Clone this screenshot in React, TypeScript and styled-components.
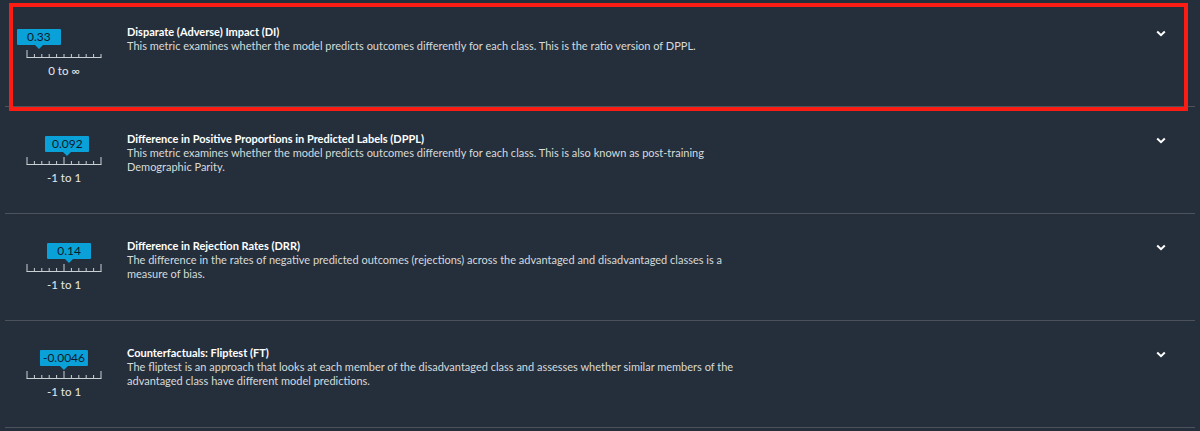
import React from 'react'
import styled, { createGlobalStyle } from 'styled-components'

type Metric = {
  title: string
  description: string
  value: string
  range: string
  position: number // 0..1 along the ruler
  centerMark?: boolean
}

const metrics: Metric[] = [
  {
    title: 'Disparate (Adverse) Impact (DI)',
    description:
      'This metric examines whether the model predicts outcomes differently for each class. This is the ratio version of DPPL.',
    value: '0.33',
    range: '0 to ∞',
    position: 0.16,
  },
  {
    title: 'Difference in Positive Proportions in Predicted Labels (DPPL)',
    description:
      'This metric examines whether the model predicts outcomes differently for each class. This is also known as post-training Demographic Parity.',
    value: '0.092',
    range: '-1 to 1',
    position: 0.546,
    centerMark: true,
  },
  {
    title: 'Difference in Rejection Rates (DRR)',
    description:
      'The difference in the rates of negative predicted outcomes (rejections) across the advantaged and disadvantaged classes is a measure of bias.',
    value: '0.14',
    range: '-1 to 1',
    position: 0.57,
    centerMark: true,
  },
  {
    title: 'Counterfactuals: Fliptest (FT)',
    description:
      'The fliptest is an approach that looks at each member of the disadvantaged class and assesses whether similar members of the advantaged class have different model predictions.',
    value: '-0.0046',
    range: '-1 to 1',
    position: 0.5,
    centerMark: true,
  },
]

const GlobalStyle = createGlobalStyle`
  html, body {
    margin: 0;
    padding: 0;
    background: #252f3c;
  }
  body {
    font-family: Lato, "Noto Sans", sans-serif;
    color: #fafafa;
  }
`

const Page = styled.div`
  position: relative;
  width: 1200px;
  height: 431px;
  background: #252f3c;
  overflow: hidden;
`

const List = styled.div`
  display: flex;
  flex-direction: column;
  padding: 0 5px;
`

const Item = styled.div`
  display: flex;
  align-items: flex-start;
  box-sizing: border-box;
  height: 107px;
  border-bottom: 1px solid #4b525b;
  padding: 24px 0 0 22px;
`

const Gauge = styled.div`
  position: relative;
  width: 74px;
  flex: none;
  padding-top: 26px;
  display: flex;
  flex-direction: column;
  align-items: center;
`

const Badge = styled.div`
  position: absolute;
  top: 5px;
  transform: translateX(-50%);
  background: #0aa0d8;
  color: #0f1b2a;
  font-size: 12px;
  line-height: 16px;
  height: 16px;
  padding: 0 3px;
  min-width: 38px;
  text-align: center;
  border-radius: 1px;
  white-space: nowrap;

  &::after {
    content: '';
    position: absolute;
    left: 50%;
    bottom: -4px;
    transform: translateX(-50%);
    border-left: 4px solid transparent;
    border-right: 4px solid transparent;
    border-top: 4px solid #0aa0d8;
  }
`

const Ruler = styled.svg`
  display: block;
  width: 76px;
  height: 8px;
`

const RangeLabel = styled.div`
  margin-top: 6px;
  font-size: 11.5px;
  line-height: 14px;
  color: #e6e8ea;
`

const Body = styled.div`
  margin-left: 26px;
  flex: 1;
  padding-top: 1px;
`

const Title = styled.div`
  font-size: 11px;
  line-height: 14px;
  font-weight: 700;
  color: #ffffff;
`

const Description = styled.div`
  max-width: 615px;
  font-size: 11px;
  line-height: 14px;
  color: #d5dbdb;
`

const Toggle = styled.button`
  flex: none;
  margin: 1px 26px 0 0;
  width: 16px;
  height: 16px;
  padding: 0;
  border: 0;
  background: none;
  color: #ffffff;
  display: flex;
  align-items: center;
  justify-content: center;
  cursor: pointer;
`

const Highlight = styled.div`
  position: absolute;
  left: 9px;
  top: 3px;
  width: 1171px;
  height: 100px;
  border: 4px solid #fb1d14;
  pointer-events: none;
`

function RulerMarks({ centerMark }: { centerMark?: boolean }) {
  const ticks = []
  for (let i = 0; i <= 10; i++) {
    const x = 1 + i * 7.4
    const tall = i === 0 || (i === 10 && centerMark) || (i === 5 && centerMark)
    ticks.push(<line key={i} x1={x} x2={x} y1={tall ? 0 : 4} y2={7.5} stroke="#c9cfd3" strokeWidth="1" />)
  }
  return (
    <Ruler viewBox="0 0 76 8">
      <line x1="0.5" x2="75.5" y1="7.5" y2="7.5" stroke="#c9cfd3" strokeWidth="1" />
      {ticks}
    </Ruler>
  )
}

function Chevron() {
  return (
    <svg width="10" height="7" viewBox="0 0 10 7">
      <path d="M1.2 1.5 L5 5.2 L8.8 1.5" fill="none" stroke="#ffffff" strokeWidth="2" strokeLinejoin="miter" />
    </svg>
  )
}

function MetricRow({ metric }: { metric: Metric }) {
  return (
    <Item>
      <Gauge>
        <Badge style={{ left: `${metric.position * 74}px` }}>{metric.value}</Badge>
        <RulerMarks centerMark={metric.centerMark} />
        <RangeLabel>{metric.range}</RangeLabel>
      </Gauge>
      <Body>
        <Title>{metric.title}</Title>
        <Description>{metric.description}</Description>
      </Body>
      <Toggle aria-label="Expand">
        <Chevron />
      </Toggle>
    </Item>
  )
}

export default function App() {
  return (
    <Page>
      <GlobalStyle />
      <List>
        {metrics.map((m) => (
          <MetricRow key={m.title} metric={m} />
        ))}
      </List>
      <Highlight />
    </Page>
  )
}
